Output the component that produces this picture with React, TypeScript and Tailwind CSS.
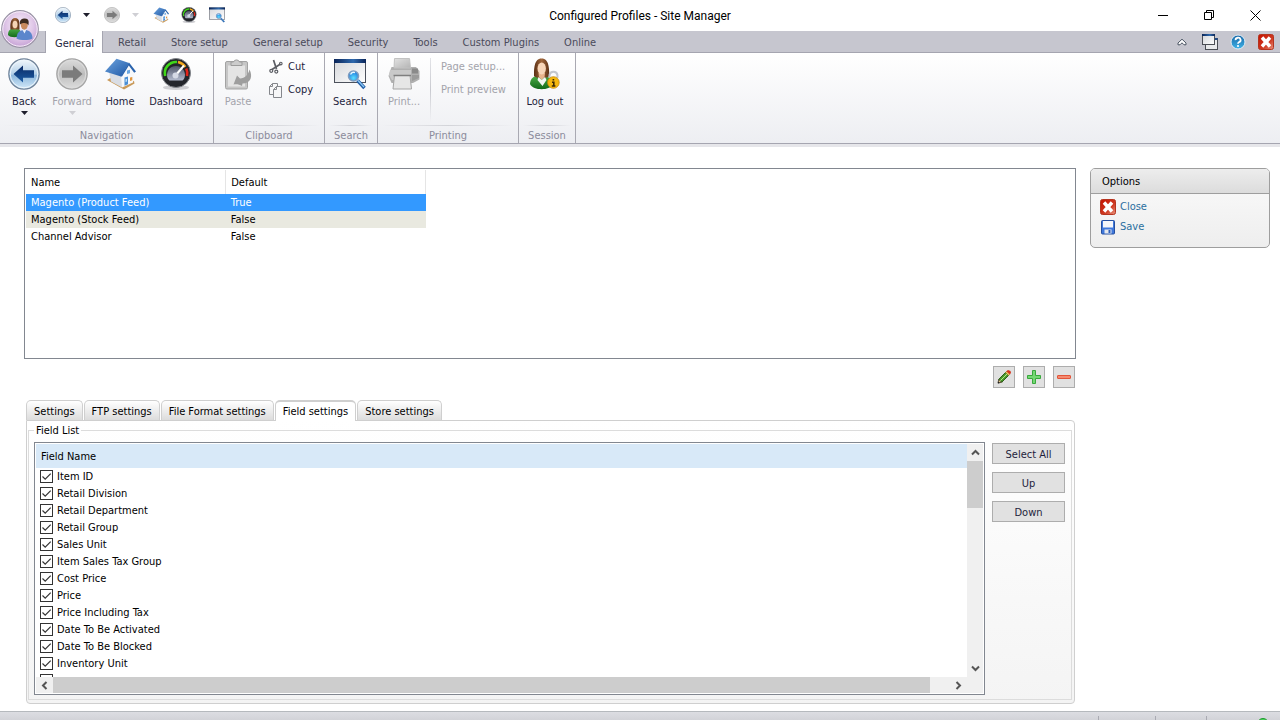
import { useState } from 'react'
import clsx from 'clsx'

type IconProps = {
  className?: string
}

const Gradients = () => (
  <svg className="absolute h-0 w-0" aria-hidden="true">
    <defs>
      <linearGradient id="blueBall" x1="0" y1="0" x2="0" y2="1">
        <stop offset="0" stopColor="#f4f9fd" />
        <stop offset="0.5" stopColor="#b4d0e8" />
        <stop offset="0.55" stopColor="#8fb8dc" />
        <stop offset="1" stopColor="#d3eafa" />
      </linearGradient>
      <linearGradient id="greyBall" x1="0" y1="0" x2="0" y2="1">
        <stop offset="0" stopColor="#dcdcdc" />
        <stop offset="0.5" stopColor="#bdbdbd" />
        <stop offset="1" stopColor="#dedede" />
      </linearGradient>
      <linearGradient id="blueArrow" x1="0" y1="0" x2="0" y2="1">
        <stop offset="0" stopColor="#0a2a66" />
        <stop offset="1" stopColor="#1c5ca4" />
      </linearGradient>
      <linearGradient id="roof" x1="0" y1="0" x2="1" y2="1">
        <stop offset="0" stopColor="#6ea4de" />
        <stop offset="1" stopColor="#1d57a6" />
      </linearGradient>
      <linearGradient id="dial" x1="0" y1="0" x2="0" y2="1">
        <stop offset="0" stopColor="#4e5468" />
        <stop offset="1" stopColor="#b3bace" />
      </linearGradient>
      <linearGradient id="pane" x1="0" y1="0" x2="1" y2="1">
        <stop offset="0" stopColor="#d4d6da" />
        <stop offset="1" stopColor="#ffffff" />
      </linearGradient>
      <linearGradient id="titleStrip" x1="0" y1="0" x2="1" y2="0">
        <stop offset="0" stopColor="#0a2457" />
        <stop offset="0.6" stopColor="#2f69ad" />
        <stop offset="1" stopColor="#0a2457" />
      </linearGradient>
      <radialGradient id="lens" cx="0.5" cy="0.7" r="0.6">
        <stop offset="0" stopColor="#5fe0ff" />
        <stop offset="1" stopColor="#1f7fe0" />
      </radialGradient>
      <linearGradient id="greyMetal" x1="0" y1="0" x2="1" y2="1">
        <stop offset="0" stopColor="#e2e2e2" />
        <stop offset="1" stopColor="#b4b4b4" />
      </linearGradient>
      <linearGradient id="redTile" x1="0" y1="0" x2="1" y2="1">
        <stop offset="0" stopColor="#c41200" />
        <stop offset="0.6" stopColor="#cf3a22" />
        <stop offset="1" stopColor="#e99580" />
      </linearGradient>
      <radialGradient id="orb" cx="0.5" cy="0.4" r="0.6">
        <stop offset="0" stopColor="#fbf3fb" />
        <stop offset="0.6" stopColor="#e0c8e8" />
        <stop offset="1" stopColor="#c49fd4" />
      </radialGradient>
      <linearGradient id="helpBall" x1="0" y1="0" x2="0" y2="1">
        <stop offset="0" stopColor="#1766a6" />
        <stop offset="1" stopColor="#41b4e8" />
      </linearGradient>
      <linearGradient id="hair" x1="0" y1="0" x2="1" y2="0">
        <stop offset="0" stopColor="#5a2f14" />
        <stop offset="0.5" stopColor="#a0673c" />
        <stop offset="1" stopColor="#5a2f14" />
      </linearGradient>
      <linearGradient id="shirt" x1="0" y1="0" x2="0" y2="1">
        <stop offset="0" stopColor="#4fb04a" />
        <stop offset="1" stopColor="#136b1a" />
      </linearGradient>
    </defs>
  </svg>
)

const BackIcon = ({ className }: IconProps) => (
  <svg viewBox="0 0 32 32" className={className} aria-hidden="true">
    <circle cx="16" cy="16" r="15.2" fill="url(#blueBall)" stroke="#6f8298" strokeWidth="1.2" />
    <circle cx="16" cy="16" r="13.8" fill="none" stroke="#eef6fc" strokeWidth="1" />
    <path d="M5.5 16 L15 7.5 V12.2 H26 V19.8 H15 V24.5 Z" fill="url(#blueArrow)" />
  </svg>
)

const ForwardIcon = ({ className }: IconProps) => (
  <svg viewBox="0 0 32 32" className={className} aria-hidden="true">
    <circle cx="16" cy="16" r="15.2" fill="url(#greyBall)" stroke="#a3a3a3" strokeWidth="1.2" />
    <circle cx="16" cy="16" r="13.8" fill="none" stroke="#dcdcdc" strokeWidth="1" />
    <path d="M26.5 16 L17 7.5 V12.2 H6 V19.8 H17 V24.5 Z" fill="#7b7b7b" />
  </svg>
)

const HomeIcon = ({ className }: IconProps) => (
  <svg viewBox="0 0 32 32" className={className} aria-hidden="true">
    <path d="M3 22 L8 19 L30 23 L30.5 25.5 L20 31.5 Z" fill="#c99a5a" />
    <path d="M5 14 L18 18 V29.5 L7 23.5 Z" fill="#d9dde4" />
    <path d="M17 17.5 L25 6 L30.5 14 L29 24.500 L18 29.500 Z" fill="#f7f8fa" />
    <path d="M1 13.500 L12.5 0.800 L25 5 L17 18.500 Z" fill="url(#roof)" />
    <path d="M25 4.600 L32 13.500 L30.2 14.8 L24.8 7.6 L18 18.6 L16.6 18.2 Z" fill="#2a63ad" />
    <path d="M20.5 19.5 L24 18.500 V26.3 L20.5 27.800 Z" fill="#4b8fd6" />
    <path d="M21.5 21.3 L23 20.8 V23.6 L21.5 24.1 Z" fill="#bfe0f7" />
    <path d="M23 12.5 L26 11.8 V15.2 L23 16 Z" fill="#6aa5df" />
    <path d="M26 19.500 L28.3 18.900 V22.2 L26 23 Z" fill="#e2953c" />
  </svg>
)

const DashboardIcon = ({ className }: IconProps) => (
  <svg viewBox="0 0 32 32" className={className} aria-hidden="true">
    <ellipse cx="16" cy="29.500" rx="13" ry="2.500" fill="#cfcfd3" />
    <circle cx="16" cy="15" r="14.500" fill="#23252b" stroke="#83868c" strokeWidth="1" />
    <path d="M5.200 18 A11.200 11.200 0 0 1 17 4" fill="none" stroke="#3fd619" strokeWidth="2.600" />
    <path d="M18 4 A11.200 11.200 0 0 1 25.200 9" fill="none" stroke="#f2a81d" strokeWidth="2.600" />
    <path d="M26.200 10.500 A11.200 11.200 0 0 1 27 18" fill="none" stroke="#e3231a" strokeWidth="2.600" />
    <path d="M8 21 A9 9 0 1 1 24 21 L22.500 22.500 H9.500 Z" fill="url(#dial)" />
    <path d="M15.500 17.500 L24 7.500" stroke="#ffffff" strokeWidth="2" />
    <circle cx="15.500" cy="17.500" r="3" fill="#d5d9e6" />
  </svg>
)

const SearchWindowIcon = ({ className }: IconProps) => (
  <svg viewBox="0 0 32 32" className={className} aria-hidden="true">
    <rect x="0.500" y="1.500" width="31" height="23" fill="url(#pane)" stroke="#4c515c" strokeWidth="1" />
    <rect x="0" y="1" width="32" height="4" fill="url(#titleStrip)" />
    <path d="M23.500 22.500 L30.500 30" stroke="#225ea8" strokeWidth="3.400" />
    <path d="M24 22.500 L30 29" stroke="#8ecbf5" strokeWidth="1.200" />
    <circle cx="19.500" cy="18" r="5" fill="url(#lens)" stroke="#7e9cc0" strokeWidth="1.600" />
    <path d="M16.500 16.500 A3.500 3.500 0 0 1 21 14.600" stroke="#eaf8ff" strokeWidth="1.400" fill="none" />
  </svg>
)

const PasteIcon = ({ className }: IconProps) => (
  <svg viewBox="0 0 32 32" className={className} aria-hidden="true">
    <rect x="3.500" y="3.500" width="22" height="27.500" rx="1.500" fill="#c6c6c6" stroke="#a3a3a3" />
    <rect x="6" y="7.500" width="17" height="21" fill="#e4e4e4" />
    <path d="M9 7.500 V4 H11.500 A3.200 3.200 0 0 1 17.500 4 H20 V7.500 Z" fill="#cccccc" stroke="#9c9c9c" />
    <path d="M11.500 26.500 L15 17.500 L18 20.500 C23 20 26 17 27.500 11.500 C31 18 29 25.500 20.500 25.500 L20 28 C17 26 14 26 11.500 26.500 Z" fill="#9e9e9e" />
  </svg>
)

const CutIcon = ({ className }: IconProps) => (
  <svg viewBox="0 0 16 16" className={className} fill="none" stroke="#5b5d63" aria-hidden="true">
    <path d="M5.500 1 L8.500 10" strokeWidth="1.700" />
    <path d="M12.500 5 L4 10.500" strokeWidth="1.700" />
    <circle cx="12.800" cy="4.600" r="1.300" strokeWidth="1.100" />
    <circle cx="3.300" cy="11.800" r="1.500" strokeWidth="1.200" />
    <circle cx="8.300" cy="12.600" r="1.500" strokeWidth="1.200" />
  </svg>
)

const CopyIcon = ({ className }: IconProps) => (
  <svg viewBox="0 0 16 16" className={className} stroke="#85878c" strokeWidth="1" aria-hidden="true">
    <path d="M4.500 1.500 H9.500 V12.500 H1.500 V4.500 Z M4.500 1.500 V4.500 H1.500" fill="#f7f7f8" />
    <path d="M8.500 4.500 H13.500 V15.500 H5.500 V7.500 Z M8.500 4.500 V7.500 H5.500" fill="#f7f7f8" />
  </svg>
)

const PrintIcon = ({ className }: IconProps) => (
  <svg viewBox="0 0 32 32" className={className} aria-hidden="true">
    <path d="M3.500 9 H28 L31.500 13 V21.500 L25 25 H3.500 L0.500 18 Z" fill="#b0b0b0" />
    <path d="M6.500 0.500 H21.500 L22.500 10 H6 Z" fill="url(#greyMetal)" stroke="#c2c2c2" />
    <path d="M2 12 H23 V22 H4 L1 17 Z" fill="#c9c9c9" />
    <path d="M24 10.500 H30 V15.500 H24 Z" fill="#8a8a8a" />
    <path d="M24 17 H31 V20 L24 23 Z" fill="#9b9b9b" />
    <path d="M6.500 17.500 H22 L23.500 31 H5 Z" fill="#e6e6e6" stroke="#a6a6a6" />
    <path d="M5.500 17.500 H23" stroke="#7f7f7f" strokeWidth="1.500" />
  </svg>
)

const LogoutIcon = ({ className }: IconProps) => (
  <svg viewBox="0 0 32 32" className={className} aria-hidden="true">
    <path d="M1 26 C1 20 6 17 12 17 C19 17 23 20 23 27 C21 32.500 4 33 1 26 Z" fill="url(#shirt)" />
    <path d="M5 18 C5 11 5 0.500 12.500 0.500 C20.500 0.500 20 11 20.500 18 C17 21 8 21 5 18 Z" fill="url(#hair)" />
    <path d="M9.500 15 H16 L15.500 19 L12.700 22 L10 19 Z" fill="#e8b48c" />
    <ellipse cx="12.700" cy="10.500" rx="4.200" ry="6" fill="#f7d5b8" />
    <path d="M9.500 19 L12.700 22 L16 19 L17.500 22 L13.500 28 L8.500 22 Z" fill="#f2f6f2" />
    <path d="M20.500 20 V17 A4 4 0 0 1 28.400 17 V20" fill="none" stroke="#c3c6cc" strokeWidth="2" />
    <circle cx="24.400" cy="24.500" r="5.800" fill="#f5b70e" stroke="#c98a07" strokeWidth="0.800" />
    <path d="M24.400 21 V22.600 M23 24.300 H24.800 V28 M22.800 28 H26.400" stroke="#3c2a05" strokeWidth="1.600" fill="none" />
  </svg>
)

const PeopleIcon = ({ className }: IconProps) => (
  <svg viewBox="0 0 38 38" className={className} aria-hidden="true">
    <circle cx="19" cy="19" r="18.300" fill="url(#orb)" stroke="#9a95a6" strokeWidth="1.200" />
    <circle cx="19" cy="19" r="17.200" fill="none" stroke="#f6edf8" strokeWidth="1" />
    <path d="M7 25 C7 20 10 18 14 18 C18 18 20 20 20 25 C18 28 9 28 7 25 Z" fill="url(#shirt)" />
    <path d="M9.500 19.500 C9 13 10 8 14 8 C19 8 18.500 13 18.500 19.500 Z" fill="url(#hair)" />
    <ellipse cx="14" cy="14.500" rx="2.500" ry="3.800" fill="#f5d3b4" />
    <path d="M15.500 28.500 C15.500 22.500 19 20 23.500 20 C28 20 31.500 22.500 31.500 28.500 C28 30.500 19 30.500 15.500 28.500 Z" fill="#5b86cc" />
    <path d="M20.500 18.500 L23.500 23.500 L26 18.500 Z" fill="#e8eefa" />
    <ellipse cx="23.300" cy="14.800" rx="3.500" ry="5" fill="#c98a5e" />
    <path d="M19 14.500 C18.200 9.500 21 8.500 24 8.500 C27.700 8.500 28.200 11.500 27.400 15.500 C26 12.500 22 12.500 19 14.500 Z" fill="#3f2c20" />
  </svg>
)

const WindowsIcon = ({ className }: IconProps) => (
  <svg viewBox="0 0 16 16" className={className} aria-hidden="true">
    <rect x="3.500" y="4.500" width="12" height="11" fill="#e9eaec" stroke="#4b4e55" />
    <rect x="3.500" y="4" width="12" height="2" fill="#1d4a8c" />
    <rect x="0.500" y="0.500" width="12" height="10" fill="url(#pane)" stroke="#4b4e55" />
    <rect x="0" y="0" width="13" height="2" fill="url(#titleStrip)" />
  </svg>
)

const HelpIcon = ({ className }: IconProps) => (
  <svg viewBox="0 0 16 16" className={className} aria-hidden="true">
    <circle cx="8" cy="8" r="7" fill="url(#helpBall)" stroke="#e4edf4" strokeWidth="1" />
    <path d="M5.600 6.200 A2.500 2.300 0 1 1 8.900 8.200 Q8 8.600 8 9.700" fill="none" stroke="#ffffff" strokeWidth="1.800" />
    <circle cx="8" cy="12" r="1.100" fill="#ffffff" />
  </svg>
)

const RedCloseIcon = ({ className }: IconProps) => (
  <svg viewBox="0 0 16 16" className={className} aria-hidden="true">
    <rect x="0.500" y="0.500" width="15" height="15" rx="2" fill="url(#redTile)" stroke="#b5341f" />
    <path d="M4 3.500 L12 12.500 M12 3.500 L4 12.500" stroke="#ffffff" strokeWidth="3.400" />
  </svg>
)

const SaveIcon = ({ className }: IconProps) => (
  <svg viewBox="0 0 16 16" className={className} aria-hidden="true">
    <rect x="1.500" y="1.500" width="13" height="13.500" rx="1" fill="#3f78dc" stroke="#254f9e" />
    <rect x="3" y="2" width="10" height="6.500" fill="#f4f6fa" />
    <rect x="4.500" y="10.500" width="7" height="4" fill="#e6e8ec" />
    <rect x="8.500" y="11" width="2" height="3" fill="#2d5fbb" />
  </svg>
)

const PencilIcon = ({ className }: IconProps) => (
  <svg viewBox="0 0 16 16" className={className} aria-hidden="true">
    <path d="M2 14 L2.800 10.200 L5.800 13.200 Z" fill="#e8c48c" stroke="#3a3320" strokeWidth="0.800" />
    <path d="M2.800 10.200 L9.500 3.500 L12.500 6.500 L5.800 13.200 Z" fill="#4a9a2c" stroke="#23530f" strokeWidth="0.900" />
    <path d="M4.300 11.700 L11 5" stroke="#b6e88e" strokeWidth="1" />
    <path d="M9.500 3.500 L10.800 2.200 L13.800 5.200 L12.500 6.500 Z" fill="#e9c765" stroke="#8f6a1c" strokeWidth="0.600" />
    <path d="M10.300 2.200 L12 1 L14.500 2 L15 4 L13.800 5.200 Z" fill="#d6341d" />
    <path d="M1.800 14.500 L2.200 12.600 L3.800 14.100 Z" fill="#1c1c1c" />
  </svg>
)

const PlusIcon = ({ className }: IconProps) => (
  <svg viewBox="0 0 16 16" className={className} aria-hidden="true">
    <path d="M6.500 1.500 H9.500 V6.500 H14.500 V9.500 H9.500 V14.500 H6.500 V9.500 H1.500 V6.500 H6.500 Z" fill="#74d872" stroke="#38a83c" />
  </svg>
)

const MinusIcon = ({ className }: IconProps) => (
  <svg viewBox="0 0 16 16" className={className} aria-hidden="true">
    <rect x="1.500" y="6.500" width="13" height="3" rx="0.500" fill="#f48a70" stroke="#e2553a" />
  </svg>
)

const DownTriangle = ({ className }: IconProps) => (
  <svg viewBox="0 0 7 4" className={clsx('h-[4px] w-[7px] fill-current', className)} aria-hidden="true">
    <path d="M0 0 H7 L3.500 4 Z" />
  </svg>
)

const ScrollArrow = ({ className }: IconProps) => (
  <svg
    viewBox="0 0 9 9"
    className={clsx('h-[9px] w-[9px]', className)}
    fill="none"
    stroke="#555555"
    strokeWidth="2"
    aria-hidden="true"
  >
    <path d="M1 6.500 L4.500 3 L8 6.500" />
  </svg>
)

const TitleBar = () => (
  <header className="grid h-[31px] grid-cols-[1fr_auto_1fr] items-center">
    <div className="flex items-center pb-px pl-[55px]">
      <button aria-label="Back">
        <BackIcon className="h-4 w-4" />
      </button>
      <button aria-label="Back history" className="ml-3">
        <DownTriangle className="text-[#1e1e2c]" />
      </button>
      <button aria-label="Forward" className="ml-[14px]" disabled>
        <ForwardIcon className="h-4 w-4" />
      </button>
      <button aria-label="Forward history" className="ml-3" disabled>
        <DownTriangle className="text-[#cfcfd4]" />
      </button>
      <button aria-label="Home" className="ml-[14px]">
        <HomeIcon className="h-4 w-4" />
      </button>
      <button aria-label="Dashboard" className="ml-3">
        <DashboardIcon className="h-4 w-4" />
      </button>
      <button aria-label="Search" className="ml-3">
        <SearchWindowIcon className="h-4 w-4" />
      </button>
    </div>
    <h1 className="font-[Roboto,'Open_Sans',sans-serif] text-[12px] leading-4 text-black">
      Configured Profiles - Site Manager
    </h1>
    <div className="flex justify-end pr-[2px] pb-px">
      <button aria-label="Minimize" className="flex h-7 w-[46px] items-center justify-center">
        <svg viewBox="0 0 11 11" className="h-[11px] w-[11px]" stroke="#000000">
          <path d="M0 5.500 H10" />
        </svg>
      </button>
      <button aria-label="Restore" className="flex h-7 w-[46px] items-center justify-center">
        <svg viewBox="0 0 11 11" className="h-[11px] w-[11px]" stroke="#000000" fill="none">
          <path d="M0.500 2.500 H7.500 V9.500 H0.500 Z M2.500 2.500 V0.500 H9.500 V7.500 H7.500" />
        </svg>
      </button>
      <button aria-label="Close" className="flex h-7 w-[46px] items-center justify-center">
        <svg viewBox="0 0 11 11" className="h-[11px] w-[11px]" stroke="#000000">
          <path d="M0.500 0.500 L10.500 10.500 M10.500 0.500 L0.500 10.500" />
        </svg>
      </button>
    </div>
  </header>
)

const ribbonTabs = ['General', 'Retail', 'Store setup', 'General setup', 'Security', 'Tools', 'Custom Plugins', 'Online']

const RibbonTabs = () => (
  <nav className="flex h-[22px] border-b border-[#a5a5b0] bg-[#c6c6cf] pl-[45px]">
    <div className="flex gap-[5px]">
      {ribbonTabs.map((tab, index) => (
        <button
          key={tab}
          className={clsx(
            'pt-[2px] whitespace-nowrap',
            index === 0
              ? '-mb-px h-[22px] border-x border-[#a5a5b0] bg-white pr-2 pl-[9px] text-[#1e1e3c]'
              : 'h-[21px] px-[10px] text-[#4a4a5a]'
          )}
        >
          {tab}
        </button>
      ))}
    </div>
    <div className="ml-auto flex items-center gap-3 pr-[6px]">
      <button aria-label="Collapse ribbon">
        <svg viewBox="0 0 10 8" className="h-2 w-[10px]" fill="#ffffff" stroke="#4b5563" strokeLinejoin="round">
          <path d="M1 5 L5 1.200 L9 5 V6.800 H7 L5 4.800 L3 6.800 H1 Z" />
        </svg>
      </button>
      <button aria-label="Windows" className="ml-[3px]">
        <WindowsIcon className="h-4 w-4" />
      </button>
      <button aria-label="Help">
        <HelpIcon className="h-4 w-4" />
      </button>
      <button aria-label="Close page">
        <RedCloseIcon className="h-4 w-4" />
      </button>
    </div>
  </nav>
)

type GroupProps = {
  title: string
  className: string
  children: React.ReactNode
}

const RibbonGroup = ({ title, className, children }: GroupProps) => (
  <section className={clsx('flex flex-col border-r border-[#a9a9b2]', className)}>
    <div className="flex flex-1 pt-[5px]">{children}</div>
    <div className="mx-1 h-px bg-linear-to-r from-transparent via-[#d3d4d9] to-transparent" />
    <h2 className="h-[17px] text-center leading-5 text-[#8b8b9b]">{title}</h2>
  </section>
)

type BigButtonProps = {
  label: string
  icon: React.ReactNode
  className: string
  disabled?: boolean
  menu?: boolean
}

const BigButton = ({ label, icon, className, disabled, menu }: BigButtonProps) => (
  <button
    disabled={disabled}
    className={clsx('flex flex-col items-center', disabled ? 'text-[#a3a3ab]' : 'text-[#1e1e3c]', className)}
  >
    {icon}
    <span className="mt-[5px] leading-[14px] whitespace-nowrap">{label}</span>
    {menu && <DownTriangle className={clsx('mt-[2px]', disabled ? 'text-[#cfcfd4]' : 'text-[#1e1e2c]')} />}
  </button>
)

const Ribbon = () => (
  <div className="flex h-[91px] border-b border-[#a5a5b0] bg-linear-to-b from-white to-[#edeef2] shadow-[0_3px_0_#e6e6ea]">
    <RibbonGroup title="Navigation" className="w-[214px]">
      <BigButton label="Back" icon={<BackIcon className="h-8 w-8" />} className="w-12" menu />
      <BigButton label="Forward" icon={<ForwardIcon className="h-8 w-8" />} className="w-12" disabled menu />
      <BigButton label="Home" icon={<HomeIcon className="h-8 w-8" />} className="w-12" />
      <BigButton label="Dashboard" icon={<DashboardIcon className="h-8 w-8" />} className="w-16" />
    </RibbonGroup>
    <RibbonGroup title="Clipboard" className="w-[111px]">
      <BigButton label="Paste" icon={<PasteIcon className="h-8 w-8" />} className="w-12" disabled />
      <div className="ml-[6px] flex flex-col gap-[6px] text-[#1e1e3c]">
        <button className="flex h-[17px] items-center gap-1">
          <CutIcon className="h-4 w-4" />
          Cut
        </button>
        <button className="flex h-[17px] items-center gap-1">
          <CopyIcon className="h-4 w-4" />
          Copy
        </button>
      </div>
    </RibbonGroup>
    <RibbonGroup title="Search" className="w-[53px]">
      <BigButton label="Search" icon={<SearchWindowIcon className="h-8 w-8" />} className="w-[50px]" />
    </RibbonGroup>
    <RibbonGroup title="Printing" className="w-[141px]">
      <BigButton label="Print..." icon={<PrintIcon className="h-8 w-8" />} className="w-[52px]" disabled />
      <div className="h-16 w-px bg-linear-to-b from-[#e3e4e8] via-[#c9cad0] to-transparent" />
      <div className="ml-[10px] flex flex-col items-start gap-[6px] text-[#a3a3ab]">
        <button className="h-[17px] whitespace-nowrap" disabled>
          Page setup...
        </button>
        <button className="h-[17px] whitespace-nowrap" disabled>
          Print preview
        </button>
      </div>
    </RibbonGroup>
    <RibbonGroup title="Session" className="w-[57px]">
      <BigButton label="Log out" icon={<LogoutIcon className="h-8 w-8" />} className="w-[52px]" />
    </RibbonGroup>
  </div>
)

const profiles = [
  { name: 'Magento (Product Feed)', isDefault: 'True' },
  { name: 'Magento (Stock Feed)', isDefault: 'False' },
  { name: 'Channel Advisor', isDefault: 'False' },
]

const ProfileList = () => {
  const [selected, setSelected] = useState(0)

  return (
    <div className="h-[191px] shrink-0 border border-[#828790] bg-white p-px">
      <table className="w-[400px] table-fixed border-collapse text-left">
        <thead>
          <tr className="h-6">
            <th className="border-r border-[#e5e5e5] pt-px pl-[5px] font-normal">Name</th>
            <th className="border-r border-[#e5e5e5] pt-px pl-[5px] font-normal">Default</th>
          </tr>
        </thead>
        <tbody>
          {profiles.map((profile, index) => (
            <tr
              key={profile.name}
              onClick={() => setSelected(index)}
              className={clsx('h-[17px]', selected === index ? 'bg-[#3399ff] text-white' : index % 2 === 1 && 'bg-[#e9e9e0]')}
            >
              <td className="pl-[5px]">{profile.name}</td>
              <td className="pl-[5px]">{profile.isDefault}</td>
            </tr>
          ))}
        </tbody>
      </table>
    </div>
  )
}

const toolButton = 'flex h-[22px] w-[22px] items-center justify-center border border-[#adadad] bg-[#e1e1e1]'

const ProfileActions = () => (
  <div className="mt-[7px] flex justify-end gap-2 pr-px">
    <button aria-label="Edit profile" className={toolButton}>
      <PencilIcon className="h-4 w-4" />
    </button>
    <button aria-label="Add profile" className={toolButton}>
      <PlusIcon className="h-4 w-4" />
    </button>
    <button aria-label="Remove profile" className={toolButton}>
      <MinusIcon className="h-4 w-4" />
    </button>
  </div>
)

const settingTabs = ['Settings', 'FTP settings', 'File Format settings', 'Field settings', 'Store settings']

const SettingTabs = () => {
  const [active, setActive] = useState('Field settings')

  return (
    <div className="mt-3 flex h-[21px] gap-px" role="tablist">
      {settingTabs.map((tab) => (
        <button
          key={tab}
          role="tab"
          aria-selected={active === tab}
          onClick={() => setActive(tab)}
          className={clsx(
            'rounded-t-[5px] border border-b-0 border-[#cfcfcf] px-[7px] whitespace-nowrap',
            active === tab ? 'z-10 h-[21px] border-t-2 bg-white' : 'h-5 bg-linear-to-b from-white to-[#dcdcdc] pt-px'
          )}
        >
          {tab}
        </button>
      ))}
    </div>
  )
}

const fields = [
  'Item ID',
  'Retail Division',
  'Retail Department',
  'Retail Group',
  'Sales Unit',
  'Item Sales Tax Group',
  'Cost Price',
  'Price',
  'Price Including Tax',
  'Date To Be Activated',
  'Date To Be Blocked',
  'Inventory Unit',
  '',
]

const FieldCheckbox = ({ label }: { label: string }) => (
  <label className="flex h-[17px] items-center gap-1 pl-1">
    <span className="relative h-[13px] w-[13px]">
      <input
        type="checkbox"
        defaultChecked
        aria-label={label || 'Unnamed field'}
        className="block h-[13px] w-[13px] peer appearance-none border border-[#333333] bg-white"
      />
      <svg
        viewBox="0 0 13 13"
        className="pointer-events-none absolute inset-0 hidden h-[13px] w-[13px] peer-checked:block"
        fill="none"
        stroke="#333333"
        strokeWidth="1.200"
        aria-hidden="true"
      >
        <path d="M2.500 6.500 L5.200 9.200 L10.700 3.700" />
      </svg>
    </span>
    {label}
  </label>
)

const FieldList = () => (
  <div className="flex min-h-0 min-w-0 flex-1 flex-col border border-[#828790] bg-white p-px">
    <div className="flex min-h-0 flex-1">
      <div className="min-w-0 flex-1 overflow-hidden">
        <table className="w-full border-collapse text-left">
          <thead>
            <tr className="h-6 bg-[#d8e9f8]">
              <th className="pt-px pl-[5px] font-normal">Field Name</th>
            </tr>
          </thead>
          <tbody>
            {fields.map((field) => (
              <tr key={field}>
                <td className="p-0">
                  <FieldCheckbox label={field} />
                </td>
              </tr>
            ))}
          </tbody>
        </table>
      </div>
      <div className="flex w-4 flex-col bg-[#f0f0f0]">
        <button aria-label="Scroll up" className="flex h-[17px] items-center justify-center">
          <ScrollArrow />
        </button>
        <div className="h-[47px] bg-[#cdcdcd]" />
        <button aria-label="Scroll down" className="mt-auto flex h-[17px] items-center justify-center">
          <ScrollArrow className="rotate-180" />
        </button>
      </div>
    </div>
    <div className="flex h-4 shrink-0 bg-[#f0f0f0] pr-4">
      <button aria-label="Scroll left" className="flex w-[17px] items-center justify-center">
        <ScrollArrow className="-rotate-90" />
      </button>
      <div className="mr-5 flex-1 bg-[#cdcdcd]" />
      <button aria-label="Scroll right" className="flex w-[17px] items-center justify-center">
        <ScrollArrow className="rotate-90" />
      </button>
    </div>
  </div>
)

const sideButton = 'h-[21px] w-[73px] border border-[#adadad] bg-[#e1e1e1] pt-px text-[#1e1e3c]'

const FieldPanel = () => (
  <div className="-mt-px flex min-h-0 flex-1 flex-col rounded-tr-[4px] rounded-b-[4px] border border-[#cfcfcf] bg-linear-to-b from-white to-[#f4f4f4] pr-[2px] pb-[3px] pl-px">
    <fieldset className="flex min-h-0 min-w-0 flex-1 flex-col border border-[#dcdcdc] pr-[6px] pb-1 pl-[5px]">
      <legend className="px-[2px] pt-px">Field List</legend>
      <div className="mt-[3px] flex min-h-0 flex-1 gap-[7px]">
        <FieldList />
        <div className="flex flex-col gap-2 pt-px">
          <button className={sideButton}>Select All</button>
          <button className={sideButton}>Up</button>
          <button className={sideButton}>Down</button>
        </div>
      </div>
    </fieldset>
  </div>
)

const Options = () => (
  <aside className="h-20 w-[180px] shrink-0 overflow-hidden rounded-[5px] border border-[#9e9e9e] bg-linear-to-b from-[#fbfbfb] to-[#eeeeee]">
    <h2 className="h-[25px] border-b border-[#9e9e9e] bg-linear-to-b from-[#ededed] to-[#dcdcdc] pl-[11px] leading-[26px]">
      Options
    </h2>
    <div className="flex flex-col gap-[3px] pt-1 pl-[9px] text-[#2b6f9f]">
      <a href="#close" className="flex h-[17px] items-center gap-1">
        <RedCloseIcon className="h-4 w-4" />
        Close
      </a>
      <a href="#save" className="flex h-[17px] items-center gap-1">
        <SaveIcon className="h-4 w-4" />
        Save
      </a>
    </div>
  </aside>
)

const StatusBar = () => (
  <footer className="flex h-[9px] shrink-0 justify-end overflow-hidden border-t border-[#b5b9bd] bg-linear-to-b from-[#dcdde2] to-[#d2d3d8] pt-1">
    <div className="w-[57px] border-l border-[#a9aab2]" />
    <div className="w-[51px] border-l border-[#a9aab2]" />
    <div className="flex w-[74px] items-start justify-end border-l border-[#a9aab2] pt-[2px] pr-[11px]">
      <span className="h-3 w-3 shrink-0 rounded-full border border-[#1d9a2c] bg-[#4cd45c]" />
    </div>
  </footer>
)

const App = () => {
  return (
    <div className="relative flex h-screen min-h-[560px] flex-col bg-white font-['DejaVu_Sans_Condensed','Noto_Sans',sans-serif] text-[11px] leading-[17px] text-black">
      <Gradients />
      <TitleBar />
      <RibbonTabs />
      <button aria-label="Application menu" className="absolute top-[10px] left-px">
        <PeopleIcon className="h-[38px] w-[38px]" />
      </button>
      <Ribbon />
      <main className="flex min-h-0 flex-1 gap-[14px] pt-6 pr-[10px] pb-[7px] pl-6">
        <div className="flex min-w-0 flex-1 flex-col">
          <ProfileList />
          <ProfileActions />
          <div className="flex min-h-0 flex-1 flex-col pr-px pl-[2px]">
            <SettingTabs />
            <FieldPanel />
          </div>
        </div>
        <Options />
      </main>
      <StatusBar />
    </div>
  )
}

export default App
